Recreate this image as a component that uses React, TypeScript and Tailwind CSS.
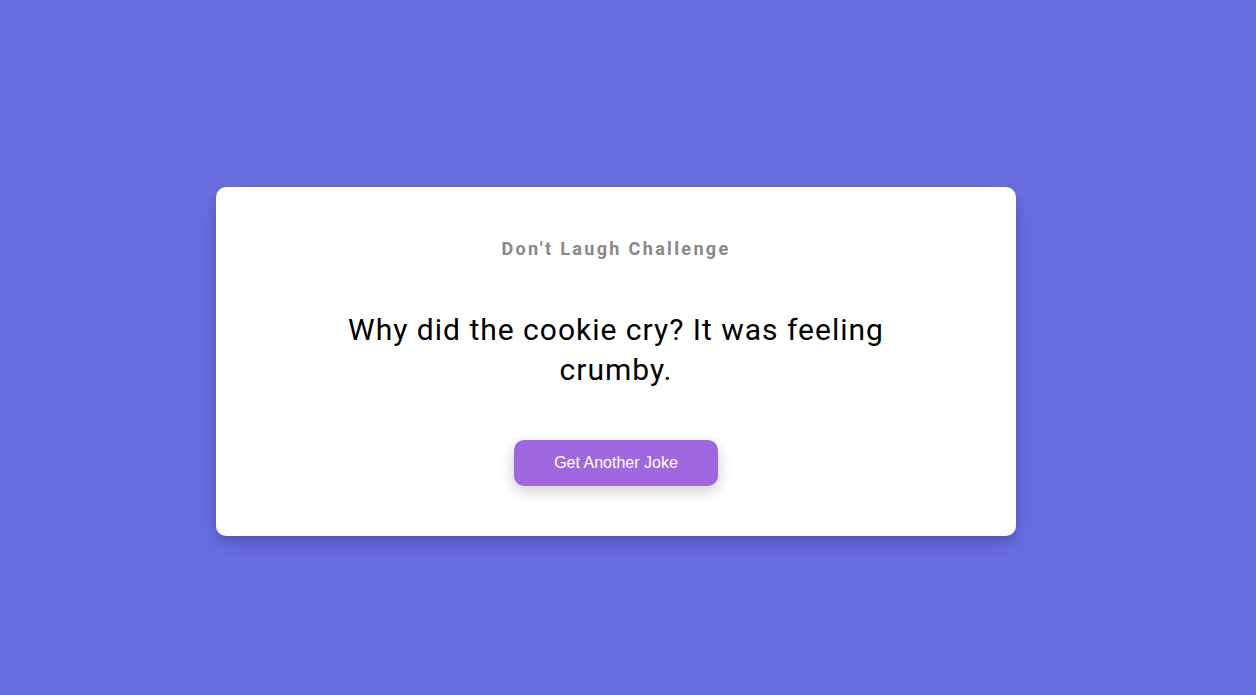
import React from 'react';

const App: React.FC = () => {
  return (
    <div className="min-h-screen w-full bg-[#686de0] flex items-center justify-center pr-[24px] pt-[28px]">
      <div className="w-[800px] bg-white rounded-[10px] shadow-[0_10px_20px_rgba(0,0,0,0.1),0_6px_6px_rgba(0,0,0,0.1)] px-[50px] pt-[51px] pb-[50px] flex flex-col items-center text-center">
        <h3 className="font-['Roboto',sans-serif] text-[18px] leading-[22px] font-bold tracking-[2.35px] text-[#888]">
          Don't Laugh Challenge
        </h3>
        <div className="font-['Roboto',sans-serif] text-[30px] leading-[40px] tracking-[1px] text-black max-w-[600px] mt-[50px] mb-[50px]">
          Why did the cookie cry? It was feeling crumby.
        </div>
        <button className="font-['Liberation_Sans',Arial,sans-serif] text-[16px] text-white bg-[#9f68e0] rounded-[10px] w-[204px] h-[46px] shadow-[0_5px_15px_rgba(0,0,0,0.2)]">
          Get Another Joke
        </button>
      </div>
    </div>
  );
};

export default App;
